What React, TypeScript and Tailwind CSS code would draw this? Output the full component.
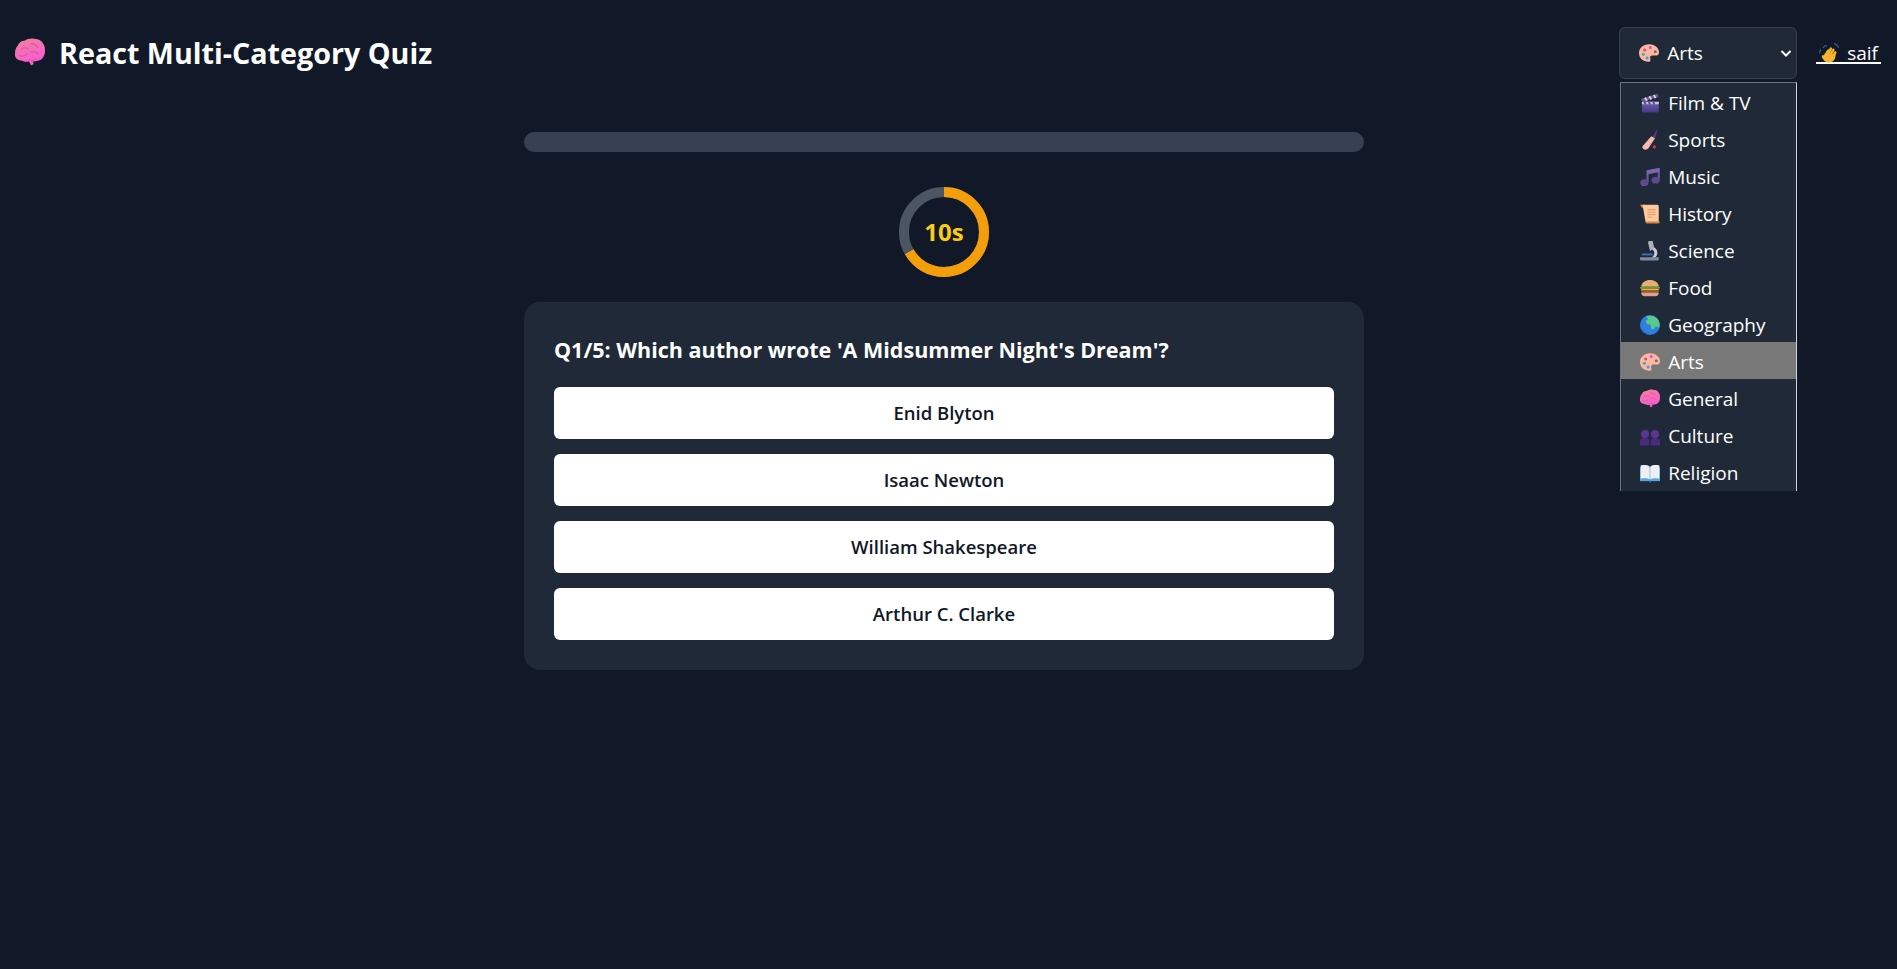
const font = { fontFamily: '"Open Sans", "Noto Sans", sans-serif' }

function Brain({ size = 20, id }: { size?: number; id: string }) {
  return (
    <svg width={size} height={size} viewBox="0 0 32 32" className="shrink-0">
      <defs>
        <linearGradient id={id} x1="0" y1="0" x2="0.4" y2="1">
          <stop offset="0" stopColor="#f0849c" />
          <stop offset="1" stopColor="#fb5ad2" />
        </linearGradient>
      </defs>
      <path d="M0 16c0-3 1-6 3-8 1-3 4-5 7-5 3-2 8-3 11-2 4 0 8 2 9 5 2 2 2 6 2 9 0 3-2 6-4 8-2 1-5 2-8 2l-1 0 1 3-3 1-2-4c-3 1-6 0-8-1-4 0-8-3-7-8z" fill={`url(#${id})`} />
      <path d="M7 12c2-2 5-2 7 0M17 6c3 0 6 1 7 4M5 19c3 1 6 0 8-2M17 15c3-1 6 0 8 2M15 23c2 1 5 1 7-1" fill="none" stroke="#d9569a" strokeWidth="1.2" strokeLinecap="round" />
    </svg>
  )
}

function Clapper() {
  return (
    <svg width={20} height={20} viewBox="0 0 32 32" className="shrink-0">
      <defs>
        <linearGradient id="clapBody" x1="0" y1="0" x2="0" y2="1">
          <stop offset="0" stopColor="#6f5fb0" />
          <stop offset="1" stopColor="#463a86" />
        </linearGradient>
      </defs>
      <path d="M2 9 28 1l2 5L4 14z" fill="#6b5a94" />
      <path d="m8 7.500 3 5M15 5.300l3 5M22 3.200l3 5" stroke="#d8d4e4" strokeWidth="3" />
      <rect x="3" y="14" width="27" height="17" rx="1.500" fill="url(#clapBody)" />
      <path d="M3 14h27v4H3z" fill="#c8c2d8" />
      <path d="M7 14l2 4M14 14l2 4M21 14l2 4" stroke="#5a4a85" strokeWidth="3" />
    </svg>
  )
}

function Bat() {
  return (
    <svg width={20} height={20} viewBox="0 0 32 32" className="shrink-0">
      <path d="m20 11 6-11 2 1-4 12z" fill="#53367f" />
      <path d="M18 10l6 3-11 17c-1 1-4 2-6 1-3-1-4-3-3-5z" fill="#f6b7ac" />
      <circle cx="23" cy="27" r="2.500" fill="#e5305f" />
    </svg>
  )
}

function Notes() {
  return (
    <svg width={20} height={20} viewBox="0 0 32 32" className="shrink-0">
      <path d="M12 6v18M30 2v18" stroke="#6a54a0" strokeWidth="3.500" />
      <path d="M11 5 31 1v7l-20 4z" fill="#7a66b0" />
      <ellipse cx="7" cy="25" rx="6.500" ry="5.500" fill="#5b4a8c" />
      <ellipse cx="25" cy="21" rx="6.500" ry="5.500" fill="#5b4a8c" />
    </svg>
  )
}

function Scroll() {
  return (
    <svg width={20} height={20} viewBox="0 0 32 32" className="shrink-0">
      <path d="M0 1h8l1 5H3z" fill="#d9824a" />
      <path d="M4 1h23c2 0 3 1 3 3v25H9z" fill="#fbc99a" />
      <path d="M9 28h23c0 1-1 3-3 3H10z" fill="#d9824a" />
      <path d="M12 9h13M12 13h13M12 17h13M12 21h7" stroke="#d99a68" strokeWidth="1.500" />
    </svg>
  )
}

function Microscope() {
  return (
    <svg width={20} height={20} viewBox="0 0 32 32" className="shrink-0">
      <path d="M0 26h30v3a2 2 0 0 1-2 2H2a2 2 0 0 1-2-2z" fill="#7d8aa8" />
      <path d="M13 3a4 4 0 0 1 8 0l2 9-7 4z" fill="#a9aeba" />
      <path d="M22 10c6 3 8 10 3 16h-6c5-4 5-9 1-12z" fill="#c6cad2" />
      <path d="M3 20h17v3H3z" fill="#3f6fc4" />
    </svg>
  )
}

function Burger() {
  return (
    <svg width={20} height={20} viewBox="0 0 32 32" className="shrink-0">
      <path d="M2 14C2 7 9 3 16 3s14 4 14 11z" fill="#e8ae72" />
      <path d="M0 14h32v3H0z" fill="#5f9c3c" />
      <path d="M2 17h28v3H2z" fill="#f1b732" />
      <path d="M2 20h28v3H2z" fill="#a0553c" />
      <path d="M2 23h28c0 4-2 6-5 6H7c-3 0-5-2-5-6z" fill="#e0a186" />
    </svg>
  )
}

function Globe() {
  return (
    <svg width={20} height={20} viewBox="0 0 32 32" className="shrink-0">
      <circle cx="16" cy="16" r="16" fill="#2f7fe0" />
      <path d="M10 2c6-2 15-1 19 6 2 3 3 8 2 12l-6-2-3 5-4-1-1-6-6-2-2-5 4-2z" fill="#58c98a" />
      <path d="M1 20c3 6 8 10 15 12C9 32 2 26 1 20z" fill="#2758c2" />
    </svg>
  )
}

function Palette() {
  return (
    <svg width={20} height={20} viewBox="0 0 32 32" className="shrink-0">
      <path d="M16 2C7 2 0 8 0 16c0 8 6 14 15 14 3 0 4-2 3-5-1-3 1-5 3-5h5c4 0 6-2 6-5 0-8-8-13-16-13z" fill="#fdb8a0" />
      <circle cx="18" cy="7" r="2.400" fill="#d84fd8" />
      <circle cx="9" cy="11" r="2.400" fill="#f03c8c" />
      <circle cx="7" cy="18" r="2.400" fill="#24b8b0" />
      <circle cx="13" cy="24" r="2.400" fill="#3c9ae8" />
      <circle cx="26" cy="14" r="2.400" fill="#7a6a70" />
    </svg>
  )
}

function People() {
  return (
    <svg width={20} height={20} viewBox="0 0 32 32" className="shrink-0">
      <circle cx="8" cy="13" r="6.500" fill="#5a3490" />
      <circle cx="24" cy="13" r="6.500" fill="#5a3490" />
      <path d="M0 31v-6c0-4 3-6 7-6h2c4 0 6 2 6 6v6z" fill="#4c2a82" />
      <path d="M17 31v-6c0-4 2-6 6-6h2c4 0 7 2 7 6v6z" fill="#4c2a82" />
    </svg>
  )
}

function Book() {
  return (
    <svg width={20} height={20} viewBox="0 0 32 32" className="shrink-0">
      <path d="M0 7h32v22H0z" fill="#57a8e0" />
      <path d="M1 4c5-1 11-1 14.500 1.500V26C12 24 6 24 1 25z" fill="#eef0f6" />
      <path d="M31 4c-5-1-11-1-14.500 1.500V26C20 24 26 24 31 25z" fill="#eef0f6" />
      <path d="M15 28h2v3h-2z" fill="#3a78c8" />
    </svg>
  )
}

function Wave() {
  return (
    <svg width={20} height={20} viewBox="0 0 32 32" className="shrink-0">
      <path d="M1 16c0-2 .5-3 1.500-5M7 7c1-2 3-3 5-3M25 1c3 1 5 3 6 6" fill="none" stroke="#2f5f94" strokeWidth="2" strokeLinecap="round" />
      <path d="m9 21 6-9M12 21l7-12M16 22l7-11M20 23l6-8" fill="none" stroke="#f7b42c" strokeWidth="4" strokeLinecap="round" />
      <path d="M6 20c-2-1-2 1-1 3 2 4 5 8 10 8 6 0 10-3 11-8l1-6-8 1-10 1z" fill="#f7b42c" />
    </svg>
  )
}

const categories = [
  { name: 'Film & TV', icon: <Clapper /> },
  { name: 'Sports', icon: <Bat /> },
  { name: 'Music', icon: <Notes /> },
  { name: 'History', icon: <Scroll /> },
  { name: 'Science', icon: <Microscope /> },
  { name: 'Food', icon: <Burger /> },
  { name: 'Geography', icon: <Globe /> },
  { name: 'Arts', icon: <Palette /> },
  { name: 'General', icon: <Brain id="brainSmall" /> },
  { name: 'Culture', icon: <People /> },
  { name: 'Religion', icon: <Book /> },
]

const answers = ['Enid Blyton', 'Isaac Newton', 'William Shakespeare', 'Arthur C. Clarke']

function Timer({ left, total }: { left: number; total: number }) {
  const r = 40
  const c = 2 * Math.PI * r
  return (
    <div className="relative w-[90px] h-[90px]">
      <svg width={90} height={90} viewBox="0 0 90 90" className="-rotate-90">
        <circle cx={45} cy={45} r={r} fill="none" stroke="#4b5563" strokeWidth={10} />
        <circle cx={45} cy={45} r={r} fill="none" stroke="#f59e0b" strokeWidth={10} strokeDasharray={c} strokeDashoffset={c * (1 - left / total)} />
      </svg>
      <span className="absolute inset-0 flex items-center justify-center text-[24px] font-bold text-[#facc15]">{left}s</span>
    </div>
  )
}

export default function App() {
  return (
    <div className="min-h-[969px] bg-[#111827] text-white" style={font}>
      <header className="flex items-center justify-between h-[106px] pl-[15px] pr-[16px]">
        <h1 className="flex items-center gap-[14px] text-[28.700px] font-bold">
          <Brain size={30} id="brainTitle" />
          React Multi-Category Quiz
        </h1>
        <div className="flex items-center gap-[19px]">
          <div className="relative">
            <div className="flex items-center w-[178px] h-[52px] pl-[19px] pr-[4px] bg-[#1f2937] border border-[#374151] rounded-md text-[19px]">
              <Palette />
              <span className="ml-[8px] pt-[1px] flex-1">Arts</span>
              <svg width={12} height={12} viewBox="0 0 12 12" fill="none" stroke="white" strokeWidth={2}>
                <path d="m1.500 4 4.500 4.500L10.500 4" />
              </svg>
            </div>
            <ul className="absolute top-[55px] left-[1px] w-[177px] h-[409px] overflow-hidden bg-[#1f2937] border-l border-t border-r border-l-[#6b7280] border-t-[#6b7280] border-r-[#d1d5db] text-[19px]">
              {categories.map((c) => (
                <li key={c.name} className={`flex items-center gap-[8px] h-[37px] pl-[19px] pt-[3px] ${c.name === 'Arts' ? 'bg-[#787878]' : ''}`}>
                  {c.icon}
                  {c.name}
                </li>
              ))}
            </ul>
          </div>
          <a className="flex items-center gap-[8px] h-[21px] pt-[2px] px-[3px] text-[19px] border-b-[2px] border-white">
            <Wave />
            saif
          </a>
        </div>
      </header>

      <main className="w-[840px] ml-[524px] mt-[26px] flex flex-col items-center">
        <div className="w-full h-[20px] rounded-[10px] bg-[#374151]" />
        <div className="mt-[35px]">
          <Timer left={10} total={15} />
        </div>
        <section className="w-full mt-[25px] p-[30px] bg-[#1f2937] rounded-2xl">
          <h2 className="text-[21.500px] font-bold leading-[35px] mb-[20px]">Q1/5: Which author wrote 'A Midsummer Night's Dream'?</h2>
          <div className="flex flex-col gap-[15px]">
            {answers.map((a) => (
              <button key={a} className="h-[52px] bg-white text-[#111827] text-[18.500px] font-semibold rounded-md">{a}</button>
            ))}
          </div>
        </section>
      </main>
    </div>
  )
}
